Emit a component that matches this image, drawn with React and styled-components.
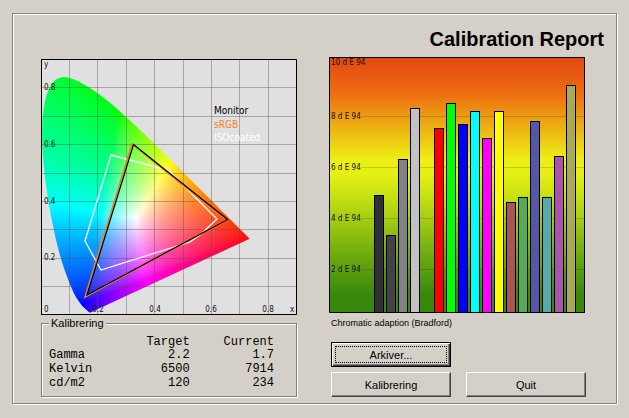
import React from 'react';
import styled, { createGlobalStyle } from 'styled-components';

const GlobalStyle = createGlobalStyle`
  * {
    box-sizing: border-box;
  }
  body {
    margin: 0;
    background-color: #d4d0c8;
    color: #000000;
    font-family: "Liberation Sans", Arial, sans-serif;
    font-size: 11px;
  }
`;

const Page = styled.div`
  padding: 13px 12px 14px;
`;

const Frame = styled.main`
  border: 1px solid #848484;
  box-shadow: 1px 1px 0 #ffffff, inset 1px 1px 0 #ffffff;
  padding-bottom: 6px;
`;

const Header = styled.header`
  height: 43px;
  padding: 13px 12px 0;
  text-align: right;
`;

const Title = styled.h1`
  margin: 0;
  font-size: 20px;
  line-height: 24px;
`;

const Columns = styled.div`
  display: grid;
  grid-template-columns: minmax(0, 1fr) minmax(0, 1fr);
  gap: 32px;
  padding: 0 31px 0 28px;
`;

const LeftColumn = styled.section`
  padding-top: 2px;
`;

const RightColumn = styled.section``;

const Chart = styled.svg`
  display: block;
  width: 100%;
  height: auto;
`;

const ScaleText = styled.text`
  font-family: "DejaVu Sans Condensed", "DejaVu Sans", sans-serif;
  font-size: 8px;
  fill: ${(props) => props.$color || '#101010'};
  text-anchor: ${(props) => props.$anchor || 'start'};
`;

const LegendText = styled(ScaleText)`
  font-size: 10px;
`;

const Group = styled.fieldset`
  margin: 2px 0 0;
  padding: 6px 22px 6px 7px;
  border: 1px solid #808080;
  box-shadow: 1px 1px 0 #ffffff, inset 1px 1px 0 #ffffff;
`;

const GroupLabel = styled.legend`
  padding: 0 2px;
  line-height: 13px;
  background-color: #d4d0c8;
`;

const ReportTable = styled.table`
  width: 100%;
  table-layout: fixed;
  border-collapse: collapse;
  font-family: "Liberation Mono", "Courier New", monospace;
  font-size: 12px;
  line-height: 14px;
`;

const ColumnName = styled.th`
  width: ${(props) => props.$width};
  padding: 0;
  font-weight: normal;
  line-height: 12px;
  text-align: right;
`;

const RowName = styled.th`
  padding: 0;
  font-weight: normal;
  text-align: left;
`;

const Value = styled.td`
  padding: 0;
  text-align: right;
`;

const Note = styled.p`
  margin: 4px 0 12px 2px;
  font-size: 9px;
  line-height: 13px;
`;

const Buttons = styled.div`
  display: grid;
  grid-template-columns: 120px 120px;
  gap: 5px 15px;
  margin-left: 2px;
`;

const Button = styled.button`
  grid-column: ${(props) => props.$column};
  height: 25px;
  padding: 0;
  border: 1px solid;
  border-color: #ffffff #404040 #404040 #ffffff;
  background-color: #d4d0c8;
  box-shadow: inset -1px -1px 0 #808080;
  color: #000000;
  font-family: inherit;
  font-size: 11px;
`;

const DefaultButton = styled(Button)`
  border-color: #000000;
  box-shadow: inset 1px 1px 0 #ffffff, inset -1px -1px 0 #404040,
    inset -2px -2px 0 #808080;
  outline: 1px dotted #000000;
  outline-offset: -5px;
`;

// spectral locus, CIE 1931
const locus = [
  [0.1741, 0.005], [0.1714, 0.0051], [0.1644, 0.0109], [0.1566, 0.0177],
  [0.144, 0.0297], [0.1241, 0.0578], [0.1096, 0.0868], [0.0913, 0.1327],
  [0.0687, 0.2007], [0.0454, 0.295], [0.0235, 0.4127], [0.0082, 0.5384],
  [0.0039, 0.6548], [0.0139, 0.7502], [0.0389, 0.812], [0.0743, 0.8338],
  [0.1142, 0.8262], [0.1547, 0.8059], [0.1929, 0.7816], [0.2296, 0.7543],
  [0.2658, 0.7243], [0.3016, 0.6923], [0.3373, 0.6589], [0.3731, 0.6245],
  [0.4441, 0.5547], [0.5125, 0.4866], [0.5752, 0.4242], [0.627, 0.3725],
  [0.6915, 0.3083], [0.7347, 0.2653],
];

const UNIT = 284;
const ORIGIN = 255;
const px = (x) => x * UNIT;
const py = (y) => ORIGIN - y * UNIT;

// smooth closed outline; the purple line at the bottom stays straight
function locusPath() {
  const pts = locus.map(([x, y]) => [px(x), py(y)]);
  let d = `M${pts[0].join(' ')}`;
  for (let i = 0; i < pts.length - 1; i += 1) {
    const p0 = pts[Math.max(i - 1, 0)];
    const p1 = pts[i];
    const p2 = pts[i + 1];
    const p3 = pts[Math.min(i + 2, pts.length - 1)];
    d += `C${p1[0] + (p2[0] - p0[0]) / 6} ${p1[1] + (p2[1] - p0[1]) / 6}`;
    d += ` ${p2[0] - (p3[0] - p1[0]) / 6} ${p2[1] - (p3[1] - p1[1]) / 6}`;
    d += ` ${p2[0]} ${p2[1]}`;
  }
  return `${d}Z`;
}

const RED = [0.735, 0.265];
const GREEN = [0.275, 0.715];
const BLUE = [0.155, 0.04];
const WHITE = [0.335, 0.335];

// barycentric weights of a point in the primaries' triangle
function weights([x, y]) {
  const det =
    (GREEN[1] - BLUE[1]) * (RED[0] - BLUE[0]) +
    (BLUE[0] - GREEN[0]) * (RED[1] - BLUE[1]);
  const r =
    ((GREEN[1] - BLUE[1]) * (x - BLUE[0]) +
      (BLUE[0] - GREEN[0]) * (y - BLUE[1])) / det;
  const g =
    ((BLUE[1] - RED[1]) * (x - BLUE[0]) +
      (RED[0] - BLUE[0]) * (y - BLUE[1])) / det;
  return [r, g, 1 - r - g];
}

const whiteWeights = weights(WHITE);

function colorAt(x, y) {
  const rgb = weights([x, y]).map((w, i) => Math.max(w, 0) / whiteWeights[i]);
  const max = Math.max(...rgb);
  const [r, g, b] = rgb.map((c) => Math.round(255 * (c / max) ** (1 / 1.6)));
  return `rgb(${r},${g},${b})`;
}

const ROW = 2;
const STOPS = 36;
const rows = Array.from({ length: 120 }, (_, i) => 16 + i * ROW);

const gridLines = [1, 2, 3, 4, 5, 6, 7, 8];

const bars = [
  { slot: 0, top: 138, color: '#303030' },
  { slot: 1, top: 178, color: '#444244' },
  { slot: 2, top: 102, color: '#828282' },
  { slot: 3, top: 51, color: '#c2c2c2' },
  { slot: 5, top: 71, color: '#ff0000' },
  { slot: 6, top: 46, color: '#00ff00' },
  { slot: 7, top: 67, color: '#0000ff' },
  { slot: 8, top: 54, color: '#00ffff' },
  { slot: 9, top: 81, color: '#ff00ff' },
  { slot: 10, top: 54, color: '#ffff00' },
  { slot: 11, top: 145, color: '#aa5555' },
  { slot: 12, top: 140, color: '#55aa55' },
  { slot: 13, top: 64, color: '#5555aa' },
  { slot: 14, top: 140, color: '#55aaaa' },
  { slot: 15, top: 99, color: '#aa55aa' },
  { slot: 16, top: 28, color: '#aaaa55' },
];

const deltas = [
  { label: '8 d E 94', y: 59 },
  { label: '6 d E 94', y: 110 },
  { label: '4 d E 94', y: 161 },
  { label: '2 d E 94', y: 212 },
];

const report = [
  { name: 'Gamma', target: '2.2', current: '1.7' },
  { name: 'Kelvin', target: '6500', current: '7914' },
  { name: 'cd/m2', target: '120', current: '234' },
];

function GamutChart() {
  return (
    <Chart viewBox="0 0 256 256" role="img" aria-label="Gamut">
      <defs>
        <clipPath id="locus">
          <path d={locusPath()} />
        </clipPath>
        {rows.map((top) => (
          <linearGradient
            key={top}
            id={`row${top}`}
            gradientUnits="userSpaceOnUse"
            x1="0"
            x2="216"
            y1="0"
            y2="0"
          >
            {Array.from({ length: STOPS + 1 }, (_, i) => (
              <stop
                key={i}
                offset={i / STOPS}
                stopColor={colorAt(
                  ((i / STOPS) * 216) / UNIT,
                  (ORIGIN - top - 1) / UNIT
                )}
              />
            ))}
          </linearGradient>
        ))}
      </defs>
      <rect width="256" height="256" fill="#e0e0e0" />
      <g clipPath="url(#locus)">
        {rows.map((top) => (
          <rect
            key={top}
            x="0"
            y={top}
            width="216"
            height={ROW}
            fill={`url(#row${top})`}
            shapeRendering="crispEdges"
          />
        ))}
      </g>
      <g stroke="#505050" strokeOpacity="0.4" shapeRendering="crispEdges">
        {gridLines.map((n) => (
          <React.Fragment key={n}>
            <path d={`M${Math.floor(n * 28.4) + 0.5} 0V256`} />
            <path d={`M0 ${Math.floor(256 - n * 28.4) + 0.5}H256`} />
          </React.Fragment>
        ))}
      </g>
      <path
        d="M70 96L127 111L147 131L176 160L159 176L149 183L60 211L44 182Z"
        fill="none"
        stroke="#ffffff"
        strokeWidth="1.3"
      />
      <path
        d="M91 85L185 161L44 238Z"
        fill="none"
        stroke="#f08020"
        strokeWidth="1.6"
      />
      <path
        d="M92.5 85.5L186.5 160.5L46 236Z"
        fill="none"
        stroke="#000000"
        strokeWidth="1.2"
      />
      <ScaleText x="3" y="8">y</ScaleText>
      <ScaleText x="3" y="31">0.8</ScaleText>
      <ScaleText x="3" y="88">0.6</ScaleText>
      <ScaleText x="3" y="145">0.4</ScaleText>
      <ScaleText x="3" y="201">0.2</ScaleText>
      <ScaleText x="3" y="253">0</ScaleText>
      <ScaleText x="57" y="253" $anchor="middle">0.2</ScaleText>
      <ScaleText x="114" y="253" $anchor="middle">0.4</ScaleText>
      <ScaleText x="170" y="253" $anchor="middle">0.6</ScaleText>
      <ScaleText x="227" y="253" $anchor="middle">0.8</ScaleText>
      <ScaleText x="249" y="253">x</ScaleText>
      <LegendText x="173" y="55" $color="#000000">Monitor</LegendText>
      <LegendText x="173" y="69" $color="#f08420">sRGB</LegendText>
      <LegendText x="173" y="82" $color="#ffffff">ISOcoated</LegendText>
      <rect x="0.5" y="0.5" width="255" height="255" fill="none" stroke="#000000" />
    </Chart>
  );
}

function DeltaChart() {
  return (
    <Chart viewBox="0 0 256 256" role="img" aria-label="Delta E">
      <defs>
        <linearGradient id="heat" x1="0" x2="0" y1="0" y2="1">
          <stop offset="0" stopColor="#e04810" />
          <stop offset="0.14" stopColor="#ee6c12" />
          <stop offset="0.24" stopColor="#eca012" />
          <stop offset="0.4" stopColor="#eeee14" />
          <stop offset="0.46" stopColor="#e4f014" />
          <stop offset="0.55" stopColor="#c4e012" />
          <stop offset="0.75" stopColor="#78b010" />
          <stop offset="0.93" stopColor="#38880c" />
          <stop offset="1" stopColor="#38880c" />
        </linearGradient>
      </defs>
      <rect width="256" height="256" fill="url(#heat)" />
      {deltas.map((delta) => (
        <React.Fragment key={delta.y}>
          <path
            d={`M32 ${delta.y + 0.5}H255`}
            stroke="#000000"
            strokeOpacity="0.15"
          />
          <ScaleText x="2" y={delta.y + 3}>{delta.label}</ScaleText>
        </React.Fragment>
      ))}
      <ScaleText x="2" y="8">10 d E 94</ScaleText>
      {bars.map((bar) => (
        <rect
          key={bar.slot}
          x={45.5 + bar.slot * 12}
          y={bar.top + 0.5}
          width="9"
          height={255 - bar.top}
          fill={bar.color}
          stroke="#000000"
        />
      ))}
      <rect x="0.5" y="0.5" width="255" height="255" fill="none" stroke="#000000" />
    </Chart>
  );
}

function App() {
  return (
    <Page>
      <GlobalStyle />
      <Frame>
        <Header>
          <Title>Calibration Report</Title>
        </Header>
        <Columns>
          <LeftColumn>
            <GamutChart />
            <Group>
              <GroupLabel>Kalibrering</GroupLabel>
              <ReportTable>
                <thead>
                  <tr>
                    <ColumnName $width="25%" />
                    <ColumnName>Target</ColumnName>
                    <ColumnName>Current</ColumnName>
                  </tr>
                </thead>
                <tbody>
                  {report.map((row) => (
                    <tr key={row.name}>
                      <RowName>{row.name}</RowName>
                      <Value>{row.target}</Value>
                      <Value>{row.current}</Value>
                    </tr>
                  ))}
                </tbody>
              </ReportTable>
            </Group>
          </LeftColumn>
          <RightColumn>
            <DeltaChart />
            <Note>Chromatic adaption (Bradford)</Note>
            <Buttons>
              <DefaultButton type="button" $column="1">Arkiver...</DefaultButton>
              <Button type="button" $column="1">Kalibrering</Button>
              <Button type="button" $column="2">Quit</Button>
            </Buttons>
          </RightColumn>
        </Columns>
      </Frame>
    </Page>
  );
}

export default App;
